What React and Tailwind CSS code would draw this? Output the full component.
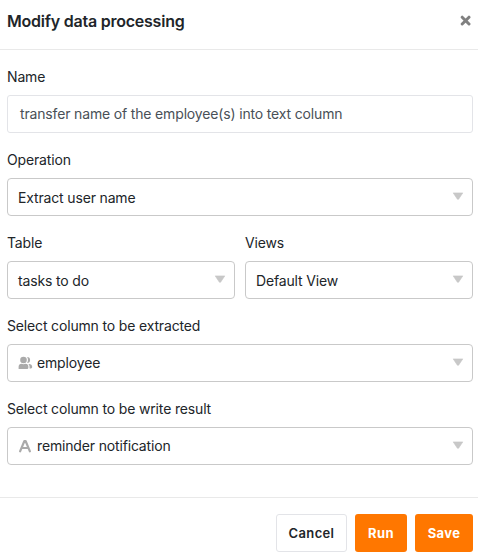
function Arrow() {
  return (
    <svg className="mb-0.5 h-2 w-3 shrink-0" viewBox="0 0 12 8"><path d="M1.200.9h9.600L6.600 7.200H5.400z" fill="#c8c8c8" stroke="#c8c8c8" strokeWidth=".6" strokeLinejoin="round" /></svg>
  );
}

function Select({ icon, children }) {
  return (
    <div className="flex h-[38px] items-center justify-between rounded-[4px] border border-[#c9c9c9] bg-white pr-2 pl-2.5">
      {icon ? <span className="flex items-center gap-1 pb-0.5">{icon}{children}</span> : <span>{children}</span>}
      <Arrow />
    </div>
  );
}

function Field({ label, children }) {
  return (
    <div className="min-w-0 flex-1">
      <div className="mb-2 h-[21px] leading-[21px]">{label}</div>
      {children}
    </div>
  );
}

function UsersIcon() {
  return (
    <svg className="mt-px h-[14px] w-[15px]" viewBox="0 0 15 14" fill="#aaa">
      <circle cx="5.500" cy="4" r="3.300" />
      <path d="M.6 13v-2.200c0-2 1.200-3 3-3 .8.500 3 .5 3.800 0 1.900 0 3 1 3 3 0 1.400-.2 2.200-1 2.200z" />
      <path d="M9.100.9a3 3 0 0 1 0 6c1.200-1.600 1.200-4.400 0-6zM10.400 7.900c2.400-.2 3.800.9 3.800 2.800 0 1.200-.5 1.700-1.300 1.700h-1.400c.2-1.900.1-3.300-1.100-4.500z" />
    </svg>
  );
}

function TextIcon() {
  return (
    <svg className="mt-px h-[14px] w-[15px]" viewBox="0 0 15 14" fill="none" stroke="#aaa" strokeWidth="2.200" strokeLinejoin="round" strokeLinecap="round">
      <path d="M2.100 12.300 6.400 2h1.200l4.300 10.300M4 9h6" />
    </svg>
  );
}

export default function App() {
  return (
    <div className="h-[558px] w-[478px] overflow-hidden bg-white font-['Inter',sans-serif] text-[14px] tracking-[-0.16px] text-[#212529]">
      <header className="flex h-[50px] items-center justify-between border-b border-[#e9e9e9] pr-[7px] pb-[7px] pl-[7px]">
        <h1 className="text-[16px] font-semibold tracking-[-0.23px]">Modify data processing</h1>
        <svg className="h-3 w-[11px]" viewBox="0 0 11 12" stroke="#808080" strokeWidth="3" strokeLinecap="round"><path d="m2.200 2.200 6.800 6.800M9 2.200 2.200 9" /></svg>
      </header>
      <main className="flex h-[447px] flex-col gap-4 pt-4 pr-[5px] pl-[7px]">
        <div>
          <Field label="Name">
            <div className="flex h-[38px] items-center rounded-[3px] border border-[#e3e4e8] px-3 pb-0.5 text-[#495057]">transfer name of the employee(s) into text column</div>
          </Field>
        </div>
        <div><Field label="Operation"><Select>Extract user name</Select></Field></div>
        <div className="flex gap-2.5">
          <Field label="Table"><Select>tasks to do</Select></Field>
          <Field label="Views"><Select>Default View</Select></Field>
        </div>
        <div><Field label="Select column to be extracted"><Select icon={<UsersIcon />}>employee</Select></Field></div>
        <div><Field label="Select column to be write result"><Select icon={<TextIcon />}>reminder notification</Select></Field></div>
      </main>
      <footer className="flex justify-end gap-2 border-t border-[#e9e9e9] pt-4 pr-[5px] text-[13px] font-bold tracking-[0.35px]">
        <button className="h-[38px] w-[71px] rounded-[3px] border border-[#e3e4e8] pt-0.5 font-semibold">Cancel</button>
        <button className="h-[38px] w-[52px] rounded-[3px] bg-[#ff7700] pt-0.5 text-white">Run</button>
        <button className="h-[38px] w-[58px] rounded-[3px] bg-[#ff7700] pt-0.5 text-white">Save</button>
      </footer>
    </div>
  );
}
